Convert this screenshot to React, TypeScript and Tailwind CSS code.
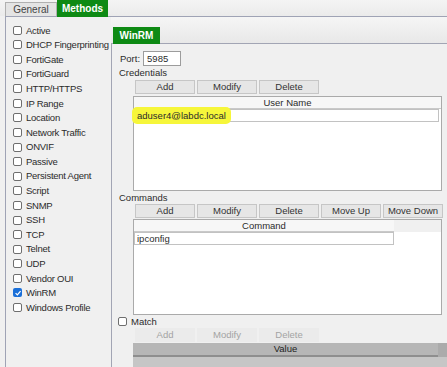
import React from "react";

const methods = [
  "Active",
  "DHCP Fingerprinting",
  "FortiGate",
  "FortiGuard",
  "HTTP/HTTPS",
  "IP Range",
  "Location",
  "Network Traffic",
  "ONVIF",
  "Passive",
  "Persistent Agent",
  "Script",
  "SNMP",
  "SSH",
  "TCP",
  "Telnet",
  "UDP",
  "Vendor OUI",
  "WinRM",
  "Windows Profile",
];

function Checkbox({ checked = false }: { checked?: boolean }) {
  if (checked) {
    return (
      <span className="flex h-[9px] w-[9px] shrink-0 items-center justify-center rounded-[2px] bg-[#1a6fd8]">
        <svg viewBox="0 0 10 10" className="h-[8px] w-[8px]">
          <path d="M2 5.2 L4.2 7.3 L8.2 2.6" fill="none" stroke="#fff" strokeWidth="1.6" />
        </svg>
      </span>
    );
  }
  return <span className="h-[9px] w-[9px] shrink-0 rounded-[2px] border border-[#6e6e6e] bg-white" />;
}

function Btn({ label, disabled = false }: { label: string; disabled?: boolean }) {
  return (
    <div
      className={
        disabled
          ? "flex h-[14px] w-[60px] items-center justify-center bg-[#ebebeb] text-[#a3a3a3]"
          : "flex h-[14px] w-[60px] items-center justify-center border border-[#c6c6c6] bg-[#e6e6e6] text-[#333]"
      }
    >
      {label}
    </div>
  );
}

export default function App() {
  return (
    <div className="relative h-[367px] w-[447px] overflow-hidden bg-[#f0f0f0] font-['Liberation_Sans',Arial,sans-serif] text-[9.5px] leading-none text-[#2b2b2b]">
      {/* outer tabs */}
      <div className="flex h-[16px] items-end bg-gradient-to-b from-[#f4f4f4] to-[#ebebeb] pl-[5px]">
        <div className="flex h-[14px] w-[52px] items-center justify-center border border-b-0 border-[#b0b0b0] bg-[#e4e4e4] text-[10px] text-[#444]">
          General
        </div>
        <div className="relative z-10 -mb-[1px] flex h-[17px] w-[51px] items-center justify-center bg-[#0e8a14] text-[10px] font-bold text-white">
          Methods
        </div>
      </div>

      <div className="ml-[5px] flex h-[351px] border-l border-t border-[#9fa3b5]">
        {/* method list */}
        <div className="flex w-[105px] shrink-0 flex-col pl-[7px] pt-[6px] tracking-[-0.25px]">
          {methods.map((m) => (
            <div key={m} className="flex h-[14.6px] items-center gap-[4px] whitespace-nowrap">
              <Checkbox checked={m === "WinRM"} />
              <span>{m}</span>
            </div>
          ))}
        </div>

        {/* WinRM tab panel */}
        <div className="flex flex-1 flex-col">
          <div className="flex h-[26px] items-end bg-gradient-to-b from-[#f5f5f5] to-[#e8e8e8] pl-[2px]">
            <div className="relative z-10 -mb-[1px] flex h-[17px] w-[47px] items-center justify-center bg-[#0e8a14] text-[10px] font-bold text-white">
              WinRM
            </div>
          </div>

          <div className="flex flex-1 flex-col border-l border-t border-[#a2a5b4]">
            <div className="mt-[7px] flex h-[15px] items-center pl-[8px]">
              <span>Port:</span>
              <div className="ml-[3px] flex h-[15px] w-[38px] items-center border border-[#9c9c9c] bg-white pl-[3px]">
                5985
              </div>
            </div>

            <div className="flex h-[13px] items-center pl-[7px]">Credentials</div>

            <div className="mt-[1px] flex gap-[2px] pl-[23px]">
              <Btn label="Add" />
              <Btn label="Modify" />
              <Btn label="Delete" />
            </div>

            <div className="ml-[21px] mt-[2px] flex h-[95px] w-[309px] flex-col border border-[#aaaaaa] bg-white">
              <div className="flex h-[12px] shrink-0 items-center justify-center border-b border-[#c9c9c9] bg-[#f7f7f7]">
                User Name
              </div>
              <div className="flex h-[13px] w-[305px] items-center border border-[#c2c2c2] pl-[2px]">
                <span className="relative">
                  <span className="absolute -left-[5px] -right-[5px] -top-[4px] -bottom-[4px] rounded-[5px] bg-[#f6f63a]" />
                  <span className="relative">aduser4@labdc.local</span>
                </span>
              </div>
            </div>

            <div className="flex h-[13px] items-center pl-[7px]">Commands</div>

            <div className="flex gap-[2px] pl-[23px]">
              <Btn label="Add" />
              <Btn label="Modify" />
              <Btn label="Delete" />
              <Btn label="Move Up" />
              <Btn label="Move Down" />
            </div>

            <div className="ml-[21px] mt-[1px] flex h-[96px] w-[309px] flex-col border border-[#aaaaaa] bg-white">
              <div className="flex h-[12px] shrink-0 bg-[#f0f0f0]">
                <div className="flex w-[260px] items-center justify-center border-b border-[#c9c9c9] bg-[#f7f7f7]">
                  Command
                </div>
              </div>
              <div className="flex h-[13px] w-[260px] items-center border border-[#c2c2c2] pl-[2px]">ipconfig</div>
            </div>

            <div className="mt-[2px] flex h-[9px] items-center gap-[4px] pl-[6px]">
              <Checkbox />
              <span>Match</span>
            </div>

            <div className="mt-[2px] flex gap-[2px] pl-[23px]">
              <Btn label="Add" disabled />
              <Btn label="Modify" disabled />
              <Btn label="Delete" disabled />
            </div>

            <div className="ml-[21px] mt-[1px] flex flex-1 flex-col bg-[#c6c6c6]">
              <div className="flex h-[14px] shrink-0 bg-[#ababab]">
                <div className="flex w-[305px] items-center justify-center border-b-2 border-[#8e8e8e] bg-[#b6b6b6] text-[#222]">
                  Value
                </div>
              </div>
            </div>
          </div>
        </div>
      </div>
    </div>
  );
}
